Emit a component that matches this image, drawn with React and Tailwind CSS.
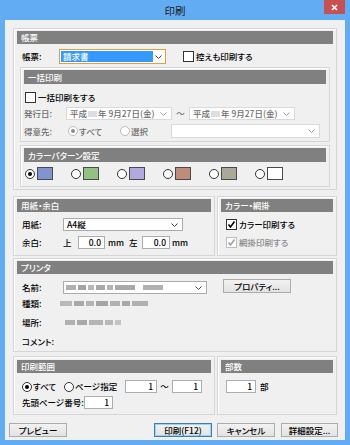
import React from "react";

const Chevron = ({ color = "#404040" }) => (
  <svg width="7" height="4" viewBox="0 0 7 4" className="shrink-0">
    <polyline points="0.5,0.5 3.5,3.5 6.5,0.5" fill="none" stroke={color} strokeWidth="1" />
  </svg>
);

const Check = ({ checked, disabled }) => (
  <span
    className={`w-[11px] h-[11px] shrink-0 border bg-white flex items-center justify-center ${
      disabled ? "border-[#bcbcbc]" : "border-[#333333]"
    }`}
  >
    {checked && (
      <svg width="9" height="9" viewBox="0 0 9 9">
        <polyline
          points="1.5,4.5 3.5,7 7.5,1.5"
          fill="none"
          stroke={disabled ? "#a0a0a0" : "#000000"}
          strokeWidth="1.6"
        />
      </svg>
    )}
  </span>
);

const Radio = ({ checked, disabled }) => (
  <span
    className={`w-[10px] h-[10px] shrink-0 rounded-full border bg-white flex items-center justify-center ${
      disabled ? "border-[#bcbcbc]" : "border-[#333333]"
    }`}
  >
    {checked && (
      <span className={`w-[4px] h-[4px] rounded-full ${disabled ? "bg-[#8a8a8a]" : "bg-black"}`} />
    )}
  </span>
);

const Header = ({ children, tall }) => (
  <div
    className={`${tall ? "h-[14px] leading-[14px]" : "h-[13px] leading-[13px]"} shrink-0 bg-[#808080] text-white pl-[4px]`}
  >
    {children}
  </div>
);

const groupCls = "border border-[#d5d5d5] shadow-[inset_1px_1px_0_#ffffff] flex flex-col";

const DateField = () => (
  <div className="w-[106px] h-[13px] shrink-0 border border-[#d9d9d9] bg-white flex items-center pl-[3px] pr-[4px] text-[#6d6d6d]">
    <span>平成</span>
    <span className="w-[9px] h-[6px] bg-[#dedede] mx-[1px]" />
    <span>年 9月27日(金)</span>
    <div className="flex-1 flex justify-end">
      <Chevron color="#9a9a9a" />
    </div>
  </div>
);

const Num = ({ w, v }) => (
  <div
    className={`${w} h-[13px] shrink-0 border border-[#abadb3] bg-white flex items-center justify-end pr-[3px] leading-none`}
  >
    {v}
  </div>
);

const Blur = ({ parts }) => (
  <div className="flex items-center gap-[2px] blur-[0.6px]">
    {parts.map((p, i) => (
      <span key={i} style={{ width: p[0], backgroundColor: p[1] }} className="h-[5px]" />
    ))}
  </div>
);

const Btn = ({ children, def, w = "w-[58px]" }) => (
  <div
    className={`${w} h-[14px] shrink-0 border ${
      def ? "border-[#3c7fb1] shadow-[inset_0_0_0_1px_#9fd0f5]" : "border-[#acacac]"
    } bg-gradient-to-b from-[#f2f2f2] to-[#e3e3e3] flex items-center justify-center leading-none`}
  >
    {children}
  </div>
);

const swatches = ["#8393d2", "#93c184", "#b2aadd", "#bf8b7b", "#aaa897", "#ffffff"];

export default function App() {
  return (
    <div className="w-[350px] h-[445px] bg-[#62acf3] flex flex-col overflow-hidden whitespace-nowrap font-['Noto_Sans_CJK_JP',sans-serif] font-medium text-[8.5px] text-black [font-feature-settings:'palt'_1]">
      {/* title bar */}
      <div className="h-[20px] shrink-0 flex items-start">
        <div className="w-[26px]" />
        <div className="flex-1 text-center text-[10.5px] leading-[22px] text-[#1a1a1a] font-normal">印刷</div>
        <div className="w-[21px] h-[14px] mr-[5px] bg-[#c75050] flex items-center justify-center">
          <svg width="7" height="7" viewBox="0 0 7 7">
            <path d="M1 1 L6 6 M6 1 L1 6" stroke="#ffffff" strokeWidth="1.6" />
          </svg>
        </div>
      </div>

      {/* client */}
      <div className="mx-[5px] h-[420px] shrink-0 bg-[#f0f0f0] px-[8px] pt-[8px] flex flex-col">
        {/* 帳票 */}
        <div className={`${groupCls} h-[162px] px-[3px] pt-[2px]`}>
          <Header>帳票</Header>
          <div className="mt-[5px] h-[15px] flex items-center pl-[5px]">
            <span className="w-[37px] shrink-0">帳票:</span>
            <div className="w-[107px] h-[15px] shrink-0 border border-[#e3a13b] bg-white flex items-center pl-[1px] pr-[3px]">
              <div className="w-[92px] h-[11px] bg-[#3399ff] text-white leading-[11px] pl-[2px]">請求書</div>
              <div className="flex-1 flex justify-end">
                <Chevron />
              </div>
            </div>
            <div className="ml-[17px] flex items-center gap-[2px]">
              <Check />
              <span>控えも印刷する</span>
            </div>
          </div>

          {/* 一括印刷 */}
          <div className={`${groupCls} mt-[3px] mx-[3px] h-[75px] px-[3px] pt-[2px]`}>
            <Header tall>一括印刷</Header>
            <div className="mt-[7px] h-[12px] flex items-center pl-[1px] gap-[2px]">
              <Check />
              <span>一括印刷をする</span>
            </div>
            <div className="mt-[4px] h-[13px] flex items-center text-[#6d6d6d]">
              <span className="w-[42px] shrink-0">発行日:</span>
              <DateField />
              <span className="w-[17px] text-center">～</span>
              <DateField />
            </div>
            <div className="mt-[4px] h-[14px] flex items-center text-[#6d6d6d]">
              <span className="w-[44px] shrink-0">得意先:</span>
              <Radio checked disabled />
              <span className="ml-[1px] w-[41px] shrink-0">すべて</span>
              <Radio disabled />
              <span className="ml-[1px] w-[40px] shrink-0">選択</span>
              <div className="w-[149px] h-[14px] shrink-0 border border-[#d9d9d9] bg-white flex items-center justify-end pr-[4px]">
                <Chevron color="#9a9a9a" />
              </div>
            </div>
          </div>

          {/* カラーパターン設定 */}
          <div className={`${groupCls} mt-[3px] mx-[3px] h-[42px] px-[3px] pt-[2px]`}>
            <Header tall>カラーパターン設定</Header>
            <div className="mt-[5px] h-[13px] flex items-center pl-[1px]">
              {swatches.map((c, i) => (
                <div key={i} className="w-[46px] shrink-0 flex items-center">
                  <Radio checked={i === 0} />
                  <span
                    style={{ backgroundColor: c }}
                    className="ml-[2px] w-[16px] h-[13px] border border-[#4a4a4a]"
                  />
                </div>
              ))}
            </div>
          </div>
        </div>

        {/* 用紙・余白 / カラー・網掛 */}
        <div className="mt-[6px] h-[60px] flex gap-[2px]">
          <div className={`${groupCls} w-[202px] px-[3px] pt-[2px]`}>
            <Header>用紙・余白</Header>
            <div className="mt-[6px] h-[13px] flex items-center pl-[5px]">
              <span className="w-[41px] shrink-0">用紙:</span>
              <div className="w-[120px] h-[13px] shrink-0 border border-[#acacac] bg-white flex items-center pl-[3px] pr-[4px]">
                <span>A4縦</span>
                <div className="flex-1 flex justify-end">
                  <Chevron />
                </div>
              </div>
            </div>
            <div className="mt-[5px] h-[13px] flex items-center pl-[5px]">
              <span className="w-[41px] shrink-0">余白:</span>
              <span className="w-[15px] shrink-0">上</span>
              <Num w="w-[27px]" v="0.0" />
              <span className="ml-[3px] w-[21px] shrink-0">mm</span>
              <span className="w-[13px] shrink-0">左</span>
              <Num w="w-[28px]" v="0.0" />
              <span className="ml-[2px]">mm</span>
            </div>
          </div>
          <div className={`${groupCls} flex-1 px-[3px] pt-[2px]`}>
            <Header>カラー・網掛</Header>
            <div className="mt-[6px] h-[13px] flex items-center pl-[5px] gap-[2px]">
              <Check checked />
              <span>カラー印刷する</span>
            </div>
            <div className="mt-[5px] h-[13px] flex items-center pl-[5px] gap-[2px] text-[#8a8a8a]">
              <Check checked disabled />
              <span>網掛印刷する</span>
            </div>
          </div>
        </div>

        {/* プリンタ */}
        <div className={`${groupCls} mt-[2px] h-[94px] px-[3px] pt-[2px]`}>
          <Header>プリンタ</Header>
          <div className="mt-[7px] h-[13px] flex items-center pl-[5px]">
            <span className="w-[41px] shrink-0">名前:</span>
            <div className="w-[144px] h-[13px] shrink-0 border border-[#acacac] bg-white flex items-center pl-[2px] pr-[4px]">
              <Blur parts={[[10, "#b0b0b0"], [8, "#a4a4a4"], [6, "#b8b8b8"], [9, "#a8a8a8"], [6, "#b4b4b4"], [20, "#a8a8a8"], [4, "#ffffff"], [20, "#b0b0b0"]]} />
              <div className="flex-1 flex justify-end">
                <Chevron />
              </div>
            </div>
            <div className="ml-[16px] -mt-[3px]">
              <Btn w="w-[68px]">プロパティ...</Btn>
            </div>
          </div>
          <div className="mt-[3px] h-[13px] flex items-center pl-[5px]">
            <span className="w-[38px] shrink-0">種類:</span>
            <Blur parts={[[12, "#b8b8b8"], [10, "#a8a8a8"], [8, "#b4b4b4"], [12, "#a4a4a4"], [10, "#b0b0b0"], [8, "#a8a8a8"], [16, "#b0b0b0"]]} />
          </div>
          <div className="mt-[6px] h-[13px] flex items-center pl-[5px]">
            <span className="w-[43px] shrink-0">場所:</span>
            <Blur parts={[[10, "#b0b0b0"], [10, "#a8a8a8"], [14, "#b4b4b4"], [8, "#b8b8b8"], [6, "#c4c4c4"]]} />
          </div>
          <div className="mt-[6px] h-[13px] flex items-center pl-[5px]">
            <span>コメント:</span>
          </div>
        </div>

        {/* 印刷範囲 / 部数 */}
        <div className="mt-[4px] h-[59px] flex gap-[2px]">
          <div className={`${groupCls} w-[202px] px-[3px] pt-[3px]`}>
            <Header>印刷範囲</Header>
            <div className="mt-[7px] h-[13px] flex items-center pl-[5px]">
              <Radio checked />
              <span className="ml-[1px] w-[31px] shrink-0">すべて</span>
              <Radio />
              <span className="ml-[1px] w-[50px] shrink-0">ページ指定</span>
              <Num w="w-[32px]" v="1" />
              <span className="w-[15px] text-center shrink-0">～</span>
              <Num w="w-[30px]" v="1" />
            </div>
            <div className="mt-[3px] h-[13px] flex items-center pl-[5px]">
              <span className="w-[62px] shrink-0">先頭ページ番号:</span>
              <Num w="w-[29px]" v="1" />
            </div>
          </div>
          <div className={`${groupCls} flex-1 px-[3px] pt-[3px]`}>
            <Header>部数</Header>
            <div className="mt-[7px] h-[13px] flex items-center pl-[5px]">
              <Num w="w-[30px]" v="1" />
              <span className="ml-[4px]">部</span>
            </div>
          </div>
        </div>

        {/* buttons */}
        <div className="mt-[8px] h-[14px] flex -ml-[4px] -mr-[1px]">
          <Btn>プレビュー</Btn>
          <div className="flex-1" />
          <Btn def>印刷(F12)</Btn>
          <div className="w-[5px]" />
          <Btn>キャンセル</Btn>
          <div className="w-[6px]" />
          <Btn w="w-[57px]">詳細設定...</Btn>
        </div>
      </div>
    </div>
  );
}
